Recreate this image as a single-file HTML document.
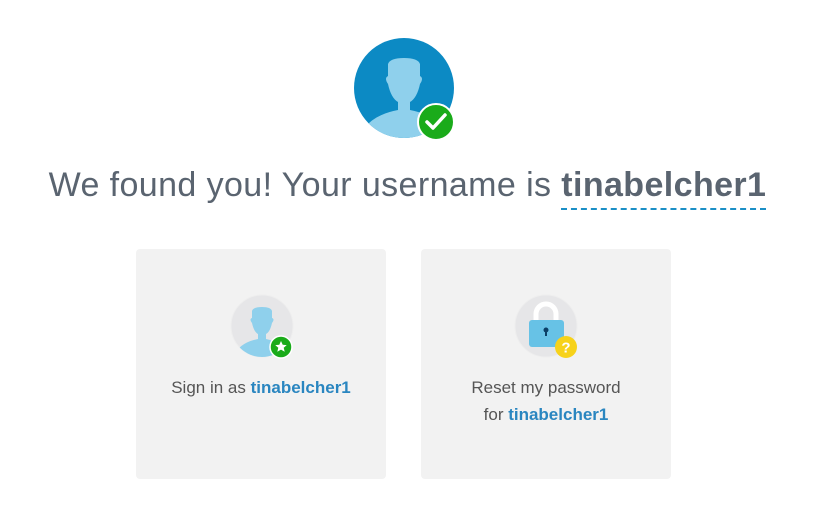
<!DOCTYPE html>
<html><head><style>
body{margin:0;background:#fff;width:815px;height:529px;position:relative;font-family:"Liberation Sans",sans-serif;overflow:hidden}
h1{position:absolute;left:0;width:815px;top:166px;margin:0;text-align:center;font-weight:normal;font-size:34px;color:#5a6470;letter-spacing:0.4px;white-space:nowrap}
h1 b{border-bottom:2px dashed #1b8fc6;padding-bottom:4px}
.card{position:absolute;top:249px;width:250px;height:230px;background:#f2f2f2;border-radius:4px}
.t{position:absolute;left:0;width:100%;text-align:center;font-size:17px;color:#555;line-height:27px}
.t b{color:#2a86c0}
svg{position:absolute}
</style></head><body>
<svg style="left:350px;top:36px" width="110" height="110" viewBox="0 0 110 110">
<defs><clipPath id="c"><circle cx="54" cy="52" r="50"/></clipPath></defs>
<circle cx="54" cy="52" r="50" fill="#0c8ac4"/>
<g clip-path="url(#c)" fill="#8fd0ec">
<path d="M38 28 q2-6 16-6 q14 0 16 6 l0 12 q4 2 0 8 q-3 14-10 18 l0 8 q32 6 40 30 l-92 0 q8-24 40-30 l0-8 q-7-4-10-18 q-4-6 0-8 z"/>
</g>
<circle cx="86" cy="86" r="18" fill="#1aab1a" stroke="#fff" stroke-width="2"/>
<path d="M77 86 l6 6 l12-13" fill="none" stroke="#fff" stroke-width="3.5" stroke-linecap="round" stroke-linejoin="round"/>
</svg>
<h1>We found you! Your username is <b>tinabelcher1</b></h1>
<div class="card" style="left:136px">
<svg style="left:94px;top:45px" width="66" height="70" viewBox="0 0 66 70">
<defs><clipPath id="d"><circle cx="32" cy="32" r="31"/></clipPath></defs>
<circle cx="32" cy="32" r="31" fill="#e6e6e8" stroke="#eee"/>
<g clip-path="url(#d)" fill="#8fd0ec"><path d="M22 17 q1-4 10-4 q9 0 10 4 l0 7 q3 1 0 5 q-2 9-6 11 l0 5 q20 4 25 19 l-58 0 q5-15 25-19 l0-5 q-4-2-6-11 q-3-4 0-5 z"/></g>
<circle cx="51" cy="53" r="11" fill="#1aab1a" stroke="#fff" stroke-width="1.5"/>
<path d="M51 47 l1.7 3.8 4 .3-3 2.7 1 4-3.7-2.2-3.7 2.2 1-4-3-2.7 4-.3z" fill="#fff"/>
</svg>
<div class="t" style="top:125px">Sign in as <b>tinabelcher1</b></div>
</div>
<div class="card" style="left:421px">
<svg style="left:93px;top:45px" width="66" height="70" viewBox="0 0 66 70">
<circle cx="32" cy="32" r="31" fill="#e6e6e8" stroke="#eee"/>
<path d="M22 28 v-8 a10 10 0 0 1 20 0 v8" fill="none" stroke="#fff" stroke-width="5"/>
<rect x="15" y="26" width="35" height="27" rx="3" fill="#67c2e6"/>
<circle cx="32" cy="36" r="2.5" fill="#0b3f66"/><rect x="31" y="36" width="2" height="6" fill="#0b3f66"/>
<circle cx="52" cy="53" r="11" fill="#f7d21a"/>
<text x="52" y="58.5" text-anchor="middle" font-family="Liberation Sans" font-weight="bold" font-size="15" fill="#fff">?</text>
</svg>
<div class="t" style="top:125px">Reset my password<br>for <b>tinabelcher1</b></div>
</div>
</body></html>
